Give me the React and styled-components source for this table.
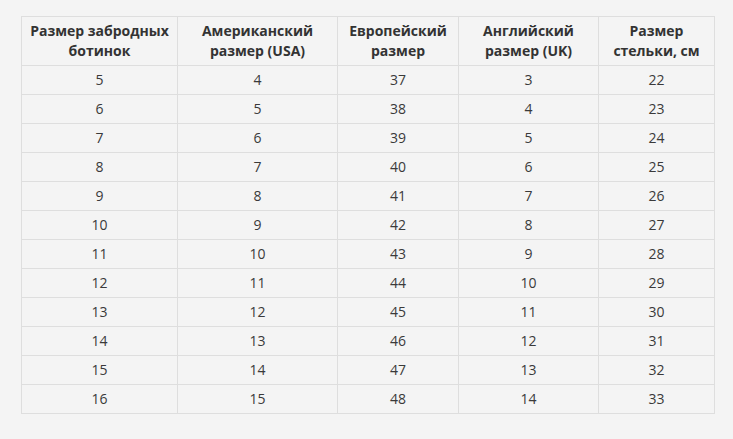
import React from 'react'
import styled, { createGlobalStyle } from 'styled-components'

const GlobalStyle = createGlobalStyle`
  html, body {
    margin: 0;
    padding: 0;
    background: #F4F4F4;
  }
`

const Page = styled.div`
  padding: 16px 0 0 21px;
  width: 733px;
  height: 439px;
  box-sizing: border-box;
  background: #F4F4F4;
  font-family: "Open Sans", "Liberation Sans", sans-serif;
  color: #333333;
`

const SizeTable = styled.table`
  border-collapse: collapse;
  table-layout: fixed;
  width: 693px;
`

const HeadCell = styled.th`
  height: 40px;
  padding: 4px 6px;
  border: 1px solid #DEDEDE;
  font-size: 14px;
  line-height: 20px;
  font-weight: 700;
  color: #333333;
  text-align: center;
  vertical-align: middle;
`

const Cell = styled.td`
  height: 28px;
  padding: 0 6px;
  border: 1px solid #DEDEDE;
  font-size: 14px;
  line-height: 20px;
  font-weight: 400;
  color: #3A3A3A;
  text-align: center;
  vertical-align: middle;
`

const columns = [
  { title: 'Размер забродных ботинок', width: 156 },
  { title: 'Американский размер (USA)', width: 160 },
  { title: 'Европейский размер', width: 121 },
  { title: 'Английский размер (UK)', width: 140 },
  { title: 'Размер стельки, см', width: 116 },
]

const rows = Array.from({ length: 12 }, (_, i) => [
  5 + i,
  4 + i,
  37 + i,
  3 + i,
  22 + i,
])

export default function App() {
  return (
    <Page>
      <GlobalStyle />
      <SizeTable>
        <colgroup>
          {columns.map((c) => (
            <col key={c.title} style={{ width: c.width }} />
          ))}
        </colgroup>
        <thead>
          <tr>
            {columns.map((c) => (
              <HeadCell key={c.title}>{c.title}</HeadCell>
            ))}
          </tr>
        </thead>
        <tbody>
          {rows.map((r) => (
            <tr key={r[0]}>
              {r.map((v, j) => (
                <Cell key={j}>{v}</Cell>
              ))}
            </tr>
          ))}
        </tbody>
      </SizeTable>
    </Page>
  )
}
